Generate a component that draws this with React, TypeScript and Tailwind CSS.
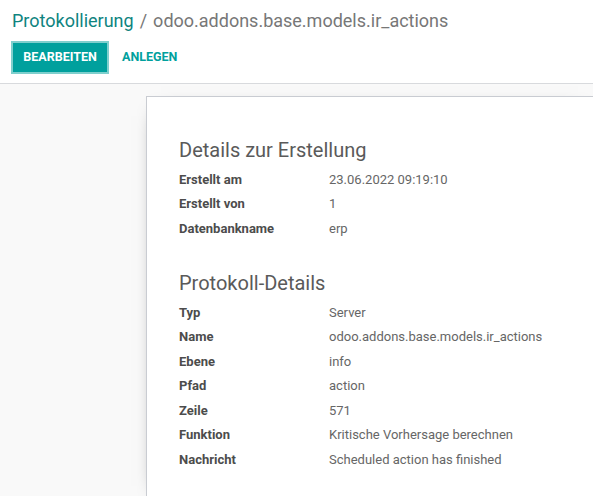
import React from "react";

const rows1: [string, string][] = [
  ["Erstellt am", "23.06.2022 09:19:10"],
  ["Erstellt von", "1"],
  ["Datenbankname", "erp"],
];

const rows2: [string, string][] = [
  ["Typ", "Server"],
  ["Name", "odoo.addons.base.models.ir_actions"],
  ["Ebene", "info"],
  ["Pfad", "action"],
  ["Zeile", "571"],
  ["Funktion", "Kritische Vorhersage berechnen"],
  ["Nachricht", "Scheduled action has finished"],
];

function Row({ label, value }: { label: string; value: string }) {
  return (
    <div className="flex h-[24.5px] items-center text-[13px]">
      <div className="w-[150px] shrink-0 font-bold text-[#4c4c4c]">{label}</div>
      <div className="whitespace-nowrap text-[#666666]">{value}</div>
    </div>
  );
}

export default function App() {
  return (
    <div
      className="flex h-[496px] w-[593px] flex-col overflow-hidden bg-white"
      style={{ fontFamily: "Roboto, 'Noto Sans', sans-serif" }}
    >
      <div className="shrink-0 border-b border-[#d8dadd] bg-white pl-[12px] pt-[7px] pb-[9px]">
        <div className="flex h-[28px] items-center whitespace-nowrap text-[18px] leading-[28px]">
          <span className="text-[#0f847f]">Protokollierung</span>
          <span className="mx-[6px] text-[#777777]">/</span>
          <span className="text-[#777777]">odoo.addons.base.models.ir_actions</span>
        </div>
        <div className="mt-[6px] flex items-center">
          <button className="-ml-[1px] flex h-[33px] w-[98px] items-center justify-center border-2 border-[#7fcfcd] bg-[#00a09d] text-[12.5px] font-bold text-white">
            BEARBEITEN
          </button>
          <span className="ml-[13px] text-[12.5px] font-bold text-[#00a09d]">ANLEGEN</span>
        </div>
      </div>
      <div className="flex flex-1 bg-[#f9f9f9] pl-[146px] pt-[12px]">
        <div className="flex-1 border border-r-0 border-b-0 border-[#c9ccd2] bg-white pl-[32px] pt-[38px] shadow-[0_5px_20px_-15px_black]">
          <div className="mb-[2px] h-[30px] text-[20px] leading-[30px] text-[#5a5a5a]">
            Details zur Erstellung
          </div>
          {rows1.map(([l, v]) => (
            <Row key={l} label={l} value={v} />
          ))}
          <div className="mt-[27px] mb-[2.5px] h-[30px] text-[20px] leading-[30px] text-[#5a5a5a]">
            Protokoll-Details
          </div>
          {rows2.map(([l, v]) => (
            <Row key={l} label={l} value={v} />
          ))}
        </div>
      </div>
    </div>
  );
}
